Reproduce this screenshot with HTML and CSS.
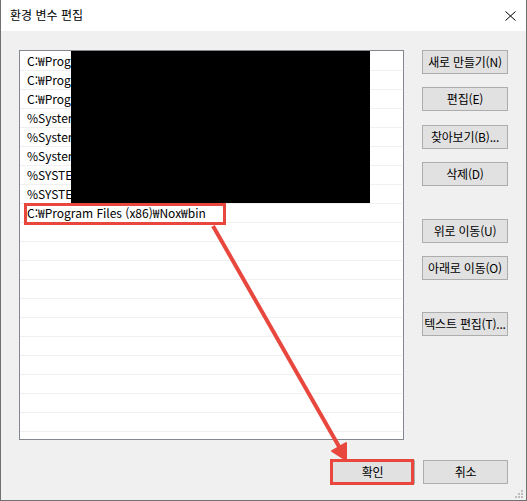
FILE: index.html
```html
<!DOCTYPE html>
<html lang="ko">
<head>
<meta charset="utf-8">
<link rel="stylesheet" href="styles.css">
</head>
<body>
<div class="window">
  <div class="titlebar">
    <span class="title">환경 변수 편집</span>
    <svg class="close" width="11" height="10" viewBox="0 0 11 10"><path d="M0.5 0.5 L10.5 9.5 M10.5 0.5 L0.5 9.5" stroke="#000" stroke-width="1" fill="none"/></svg>
  </div>
  <div class="body">
    <div class="main">
      <div class="list">
        <div class="row">C:₩Program Files₩Common Files₩Oracle₩Java₩javapath</div>
        <div class="row">C:₩Program Files (x86)₩Intel₩iCLS Client₩</div>
        <div class="row">C:₩Program Files₩Intel₩iCLS Client₩</div>
        <div class="row">%SystemRoot%₩system32</div>
        <div class="row">%SystemRoot%</div>
        <div class="row">%SystemRoot%₩System32₩Wbem</div>
        <div class="row">%SYSTEMROOT%₩System32₩WindowsPowerShell₩v1.0₩</div>
        <div class="row">%SYSTEMROOT%₩System32₩OpenSSH₩</div>
        <div class="row">C:₩Program Files (x86)₩Nox₩bin</div>
        <div class="row"></div>
        <div class="row"></div>
        <div class="row"></div>
        <div class="row"></div>
        <div class="row"></div>
        <div class="row"></div>
        <div class="row"></div>
        <div class="row"></div>
        <div class="row"></div>
        <div class="row"></div>
        <div class="row"></div>
        <div class="row"></div>
        <div class="redact"></div>
        <div class="highlight"></div>
      </div>
      <div class="side">
        <button class="btn">새로 만들기(N)</button>
        <button class="btn">편집(E)</button>
        <button class="btn">찾아보기(B)...</button>
        <button class="btn">삭제(D)</button>
        <button class="btn group">위로 이동(U)</button>
        <button class="btn">아래로 이동(O)</button>
        <button class="btn group2">텍스트 편집(T)...</button>
      </div>
    </div>
    <div class="footer">
      <button class="btn ok">확인<span class="ring"></span></button>
      <button class="btn">취소</button>
    </div>
    <svg class="grip" width="9" height="9" viewBox="0 0 9 9" fill="#bdbdbd">
      <rect x="6" y="0" width="2" height="2"/>
      <rect x="3" y="3" width="2" height="2"/><rect x="6" y="3" width="2" height="2"/>
      <rect x="0" y="6" width="2" height="2"/><rect x="3" y="6" width="2" height="2"/><rect x="6" y="6" width="2" height="2"/>
    </svg>
  </div>
  <svg class="arrow" width="527" height="501" viewBox="0 0 527 501">
    <line x1="213" y1="226" x2="341" y2="450" stroke="#e8473e" stroke-width="4"/>
    <polygon points="346,460 332,451 346,443" fill="#e8473e" stroke="#e8473e" stroke-width="2" stroke-linejoin="round"/>
  </svg>
</div>
</body>
</html>
```
FILE: styles.css
```css
* { box-sizing: border-box; }
html, body { margin: 0; padding: 0; background: #f0f0f0; }
body {
  font-family: "Noto Sans CJK KR", "Noto Sans", sans-serif;
  font-size: 12px;
  color: #000;
}
.window {
  position: relative;
  width: 527px;
  height: 501px;
  border: 1px solid #717171;
  border-top: none;
  display: flex;
  flex-direction: column;
  background: #f0f0f0;
}
.titlebar {
  height: 31px;
  background: #fff;
  display: flex;
  align-items: center;
  justify-content: space-between;
  padding: 0 10px 1px 9px;
}
.title { font-size: 12px; line-height: 16px; }
.close { display: block; margin-top: 1px; }
.body {
  position: relative;
  flex: 1;
  padding: 19px 18px 0 18px;
  display: flex;
  flex-direction: column;
}
.main { display: flex; align-items: flex-start; }
.list {
  position: relative;
  width: 389px;
  height: 390px;
  border: 1px solid #828790;
  background: #fff;
  padding-top: 1px;
  overflow: hidden;
}
.row {
  height: 19px;
  border-bottom: 1px solid #f0f0f0;
  margin-right: 1px;
  padding-left: 7px;
  line-height: 17px;
  white-space: nowrap;
  overflow: hidden;
}
.redact {
  position: absolute;
  left: 51px;
  top: -1px;
  width: 299px;
  height: 153px;
  background: #000;
}
.highlight {
  position: absolute;
  left: 4px;
  top: 152px;
  width: 202px;
  height: 22px;
  border: 3px solid #e8473e;
}
.side {
  margin-left: 18px;
  display: flex;
  flex-direction: column;
  gap: 13px;
}
.btn {
  position: relative;
  width: 86px;
  height: 24px;
  border: 1px solid #adadad;
  background: #e1e1e1;
  font-family: "Noto Sans CJK KR", "Noto Sans", sans-serif;
  font-size: 12px;
  color: #000;
  padding: 0;
  line-height: 20px;
  white-space: nowrap;
  letter-spacing: -0.2px;
}
.side .btn:nth-child(3) { margin-top: 1px; }
.side .group { margin-top: 20px; }
.side .group2 { margin-top: 19px; }
.footer {
  margin-top: 20px;
  display: flex;
  justify-content: flex-end;
  gap: 8px;
}
.footer .btn { width: 85px; }
.ring {
  position: absolute;
  left: -1px;
  top: -2px;
  right: 0;
  bottom: -2px;
  border: 3px solid #e8473e;
}
.grip { position: absolute; right: 2px; bottom: 1px; }
.arrow { position: absolute; left: -1px; top: 0; pointer-events: none; }
```
